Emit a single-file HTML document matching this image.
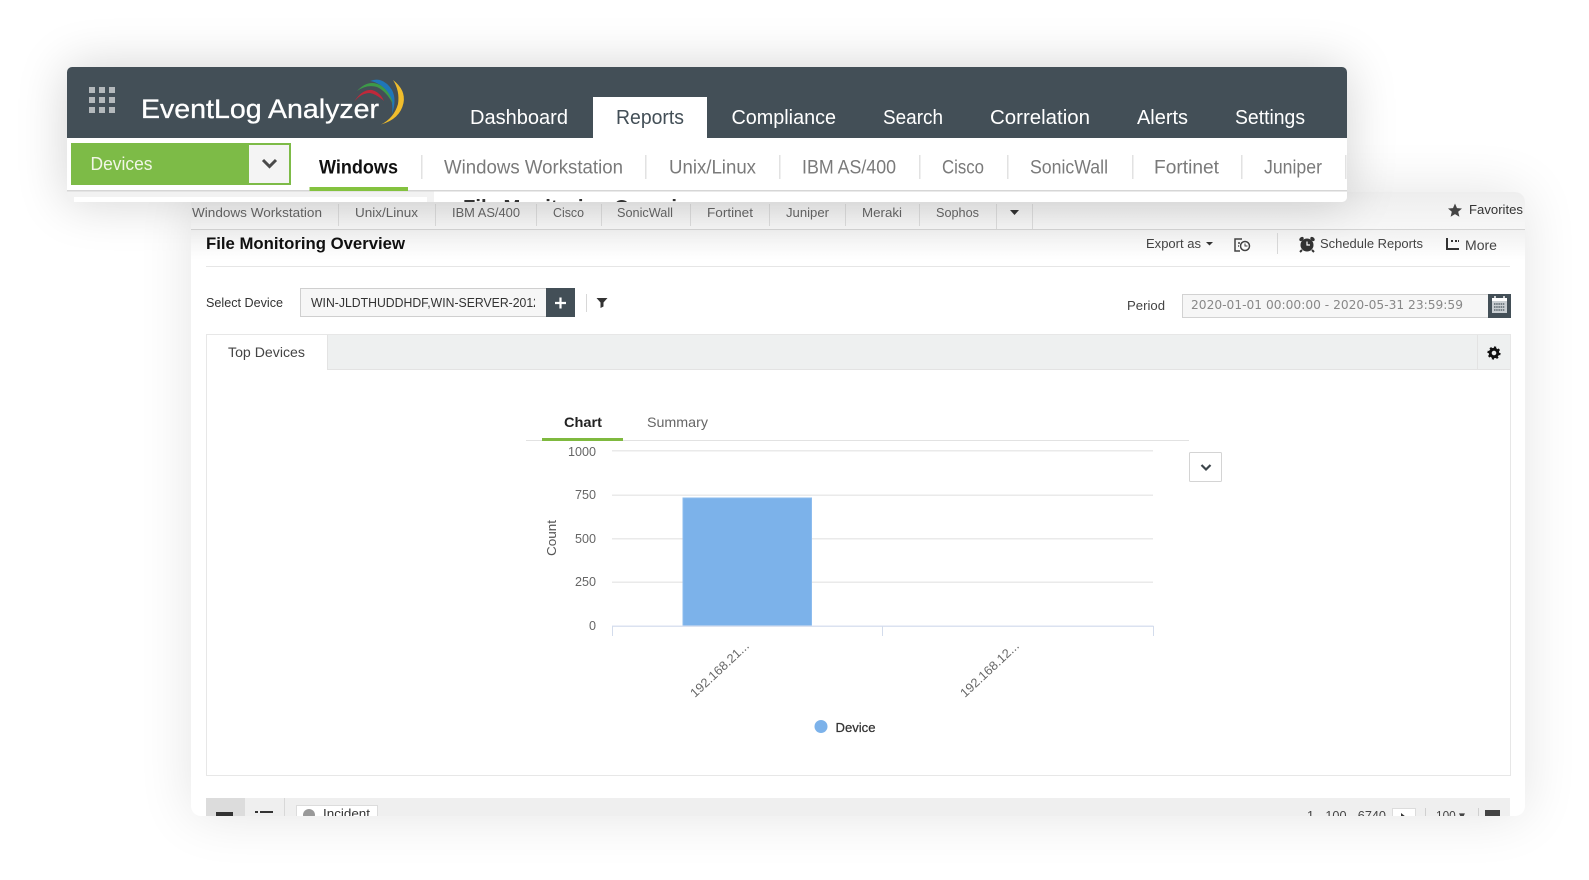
<!DOCTYPE html>
<html lang="en">
<head>
<meta charset="utf-8">
<title>EventLog Analyzer - File Monitoring Overview</title>
<style>
html,body{margin:0;padding:0;background:#fff;width:1589px;height:880px;overflow:hidden}
.abs{position:absolute}
#lower{left:191px;top:192px;width:1334px;height:624px;background:#fff;border-radius:10px;box-shadow:0 0 55px rgba(0,0,0,.11)}
#upper{left:67px;top:67px;width:1280px;height:135px;background:#f2f2f2;border-radius:5px;box-shadow:0 0 50px rgba(0,0,0,.18)}
svg{position:absolute;left:0;top:0;font-family:"Liberation Sans",sans-serif}
</style>
</head>
<body>
<div id="lower" class="abs"></div>
<svg width="1589" height="880" viewBox="0 0 1589 880">
<defs>
<clipPath id="cl"><rect x="191" y="192" width="1334" height="624" rx="10"/></clipPath>
<linearGradient id="st" x1="0" y1="0" x2="0" y2="1"><stop offset="0" stop-color="#eeeeee"/><stop offset="1" stop-color="#f7f7f7"/></linearGradient>
<linearGradient id="fade" x1="0" y1="0" x2="0" y2="1"><stop offset="0" stop-color="#f1f1f1"/><stop offset="1" stop-color="#ffffff"/></linearGradient>
</defs>
<g clip-path="url(#cl)">
<rect x="190" y="192" width="1337" height="37" fill="url(#st)"/>
<rect x="190" y="229" width="1337" height="1" fill="#d4d4d4"/>
<rect x="190" y="230" width="1337" height="30" fill="url(#fade)"/>
<g font-size="13" fill="#666">
<text x="192" y="217" textLength="130" lengthAdjust="spacingAndGlyphs">Windows Workstation</text>
<text x="355" y="217" textLength="63" lengthAdjust="spacingAndGlyphs">Unix/Linux</text>
<text x="452" y="217" textLength="68" lengthAdjust="spacingAndGlyphs">IBM AS/400</text>
<text x="553" y="217" textLength="31" lengthAdjust="spacingAndGlyphs">Cisco</text>
<text x="617" y="217" textLength="56" lengthAdjust="spacingAndGlyphs">SonicWall</text>
<text x="707" y="217" textLength="46" lengthAdjust="spacingAndGlyphs">Fortinet</text>
<text x="786" y="217" textLength="43" lengthAdjust="spacingAndGlyphs">Juniper</text>
<text x="862" y="217" textLength="40" lengthAdjust="spacingAndGlyphs">Meraki</text>
<text x="936" y="217" textLength="43" lengthAdjust="spacingAndGlyphs">Sophos</text>
</g>
<g fill="#dcdcdc">
<rect x="338" y="204" width="1" height="22"/><rect x="435" y="204" width="1" height="22"/><rect x="536" y="204" width="1" height="22"/><rect x="601" y="204" width="1" height="22"/><rect x="690" y="204" width="1" height="22"/><rect x="769" y="204" width="1" height="22"/><rect x="845" y="204" width="1" height="22"/><rect x="919" y="204" width="1" height="22"/><rect x="996" y="204" width="1" height="25"/><rect x="1032" y="204" width="1" height="25"/>
</g>
<path d="M1010 210h9l-4.500 5z" fill="#333"/>
<path d="M1455 203.500l2 4.600 5 .4-3.800 3.300 1.200 4.900-4.400-2.600-4.400 2.600 1.200-4.900-3.800-3.300 5-.4z" fill="#444"/>
<text x="1469" y="214" font-size="13" fill="#333" textLength="54" lengthAdjust="spacingAndGlyphs">Favorites</text>

<text x="206" y="249" font-size="17" font-weight="700" fill="#111" textLength="199" lengthAdjust="spacingAndGlyphs">File Monitoring Overview</text>
<rect x="206" y="266" width="1304" height="1" fill="#e6e6e6"/>

<text x="1146" y="248" font-size="13" fill="#444" textLength="55" lengthAdjust="spacingAndGlyphs">Export as</text>
<path d="M1206 242h7l-3.500 3.500z" fill="#333"/>
<path d="M1242 239h-7v12h5M1238 243h2M1238 246h1" fill="none" stroke="#444" stroke-width="1.500"/>
<circle cx="1245" cy="246" r="4.500" fill="#fff" stroke="#444" stroke-width="1.500"/>
<path d="M1245 243.500v2.500h2.500" fill="none" stroke="#444" stroke-width="1"/>
<rect x="1277" y="233" width="1" height="21" fill="#d8d8d8"/>
<circle cx="1307" cy="245" r="6.500" fill="#333"/>
<ellipse cx="1301.500" cy="239" rx="2.500" ry="1.800" transform="rotate(-40 1301.500 239)" fill="#333"/>
<ellipse cx="1312.500" cy="239" rx="2.500" ry="1.800" transform="rotate(40 1312.500 239)" fill="#333"/>
<path d="M1302 250l-2 2M1312 250l2 2" stroke="#333" stroke-width="2"/>
<path d="M1307 241.500v3.500h3" fill="none" stroke="#fff" stroke-width="1.200"/>
<text x="1320" y="248" font-size="13" fill="#444" textLength="103" lengthAdjust="spacingAndGlyphs">Schedule Reports</text>
<path d="M1447 238v11h12" fill="none" stroke="#333" stroke-width="2"/>
<path d="M1451 241h2M1455 241h2M1458 241h1" fill="none" stroke="#333" stroke-width="2"/>
<text x="1465" y="250" font-size="13.500" fill="#444" textLength="32" lengthAdjust="spacingAndGlyphs">More</text>

<text x="206" y="307" font-size="13" fill="#333" textLength="77" lengthAdjust="spacingAndGlyphs">Select Device</text>
<rect x="300.500" y="288.500" width="246" height="28" fill="#f6f6f6" stroke="#cfcfcf"/>
<svg x="311" y="290" width="224" height="24" style="position:static"><text x="0" y="17" font-size="13" fill="#333" textLength="229" lengthAdjust="spacingAndGlyphs">WIN-JLDTHUDDHDF,WIN-SERVER-2012</text></svg>
<rect x="546" y="288" width="29" height="29" fill="#434f57"/>
<path d="M560.500 297.500v11M555 303h11" stroke="#fff" stroke-width="2.200"/>
<rect x="586" y="294" width="1" height="18" fill="#d8d8d8"/>
<path d="M596.500 298h11l-4 4.500v4l-3 1.500v-5.500z" fill="#333"/>

<text x="1127" y="310" font-size="13" fill="#444" textLength="38" lengthAdjust="spacingAndGlyphs">Period</text>
<rect x="1182.500" y="294.500" width="306" height="23" fill="#f6f6f6" stroke="#d2d2d2"/>
<text x="1191" y="309" font-size="12.500" fill="#888" font-family="'DejaVu Sans',sans-serif" textLength="272" lengthAdjust="spacingAndGlyphs">2020-01-01 00:00:00 - 2020-05-31 23:59:59</text>
<rect x="1488" y="294" width="23" height="24" fill="#434f57"/>
<rect x="1492" y="298" width="15" height="15" fill="#c9ced2"/>
<rect x="1492" y="298" width="15" height="3" fill="#fff"/>
<path d="M1495 296v4M1504 296v4" stroke="#fff" stroke-width="1.500"/>
<path d="M1494 304h11M1494 307h11M1494 310h11" stroke="#5b666d" stroke-width="1.500" stroke-dasharray="1.500 .7"/>

<rect x="206.500" y="334.500" width="1304" height="441" fill="#fff" stroke="#e7e7e7"/>
<rect x="207" y="335" width="1303" height="34" fill="#eef0f0"/>
<rect x="207" y="369" width="1303" height="1" fill="#e3e3e3"/>
<rect x="207" y="335" width="120" height="35" fill="#fff"/>
<rect x="327" y="335" width="1" height="35" fill="#e3e3e3"/>
<text x="228" y="357" font-size="14" fill="#444" textLength="77" lengthAdjust="spacingAndGlyphs">Top Devices</text>
<rect x="1477" y="335" width="1" height="34" fill="#e3e3e3"/>
<circle cx="1494" cy="353" r="3.800" fill="none" stroke="#111" stroke-width="3"/>
<circle cx="1494" cy="353" r="5.500" fill="none" stroke="#111" stroke-width="2.200" stroke-dasharray="2 2.300"/>

<rect x="526" y="440" width="663" height="1" fill="#e2e2e2"/>
<rect x="542" y="438" width="81" height="3" fill="#7fb93f"/>
<text x="564" y="427" font-size="14" font-weight="700" fill="#222" textLength="38" lengthAdjust="spacingAndGlyphs">Chart</text>
<text x="647" y="427" font-size="14" fill="#666" textLength="61" lengthAdjust="spacingAndGlyphs">Summary</text>

<g fill="#eaeaea">
<rect x="612" y="450" width="541" height="1.500"/><rect x="612" y="494.500" width="541" height="1.500"/><rect x="612" y="538" width="541" height="1.500"/><rect x="612" y="581.500" width="541" height="1.500"/>
</g>
<g font-size="12.500" fill="#666">
<text x="568" y="456" textLength="28" lengthAdjust="spacingAndGlyphs">1000</text>
<text x="575" y="499" textLength="21" lengthAdjust="spacingAndGlyphs">750</text>
<text x="575" y="543" textLength="21" lengthAdjust="spacingAndGlyphs">500</text>
<text x="575" y="586" textLength="21" lengthAdjust="spacingAndGlyphs">250</text>
<text x="589" y="630" textLength="7" lengthAdjust="spacingAndGlyphs">0</text>
</g>
<text transform="translate(556,556) rotate(-90)" font-size="13" fill="#555" textLength="36" lengthAdjust="spacingAndGlyphs">Count</text>
<rect x="683" y="498" width="128.500" height="128" fill="#7cb2ea" stroke="#8dbcee"/>
<rect x="612" y="625.500" width="541.500" height="1.500" fill="#dbe2f0"/>
<path d="M612.500 626v10M882.500 626v10M1153.500 626v10" stroke="#d3dcec" fill="none"/>
<text transform="translate(695,698) rotate(-43)" font-size="12.500" fill="#666" textLength="75" lengthAdjust="spacingAndGlyphs">192.168.21...</text>
<text transform="translate(965,698) rotate(-43)" font-size="12.500" fill="#666" textLength="75" lengthAdjust="spacingAndGlyphs">192.168.12...</text>
<circle cx="821" cy="726.500" r="6.500" fill="#7cb2ea"/>
<text x="835.500" y="732" font-size="13" fill="#333" font-weight="400" textLength="40" lengthAdjust="spacingAndGlyphs" stroke="#333" stroke-width=".25">Device</text>

<rect x="1189.500" y="452.500" width="32" height="29" rx="1" fill="#fff" stroke="#d4d4d4"/>
<path d="M1201.500 465l4.500 4.500 4.500-4.500" fill="none" stroke="#3c454b" stroke-width="2.200"/>

<rect x="206" y="798" width="1304" height="20" fill="#efefef"/>
<rect x="206" y="798" width="39" height="20" fill="#dcdcdc"/>
<rect x="216" y="812" width="17" height="6" fill="#333"/>
<path d="M255 812h3M260 812h13" stroke="#333" stroke-width="2"/>
<rect x="284" y="798" width="1" height="20" fill="#d8d8d8"/>
<rect x="296.500" y="805.500" width="81" height="14" fill="#fff" stroke="#dcdcdc"/>
<circle cx="309" cy="815" r="6" fill="#999"/>
<text x="323" y="818" font-size="12.500" fill="#333" textLength="47" lengthAdjust="spacingAndGlyphs">Incident</text>
<text x="1307" y="820" font-size="12.500" fill="#444" textLength="79" lengthAdjust="spacingAndGlyphs">1 - 100 - 6740</text>
<rect x="1392.500" y="808.500" width="23" height="12" fill="#fff" stroke="#dcdcdc"/>
<path d="M1401 813l5 4h-5z" fill="#333"/>
<rect x="1425" y="808" width="1" height="10" fill="#d0d0d0"/>
<text x="1436" y="820" font-size="13" fill="#444" textLength="29" lengthAdjust="spacingAndGlyphs">100 ▾</text>
<rect x="1478" y="808" width="1" height="10" fill="#d0d0d0"/>
<rect x="1485" y="810" width="15" height="8" fill="#444"/>
</g>
</svg>

<div id="upper" class="abs"></div>
<svg width="1589" height="880" viewBox="0 0 1589 880">
<defs>
<clipPath id="cu"><rect x="67" y="67" width="1280" height="135" rx="5"/></clipPath>
</defs>
<g clip-path="url(#cu)">
<rect x="67" y="67" width="1280" height="124" fill="#fff"/>
<rect x="67" y="67" width="1280" height="71" fill="#434f57"/>
<rect x="67" y="190" width="1280" height="1.500" fill="#d6d6d6"/>
<rect x="74" y="197" width="353" height="6" fill="#fff"/>
<rect x="434" y="191.500" width="913" height="11" fill="#fff"/>
<text x="463" y="214" font-size="20" font-weight="700" fill="#333" textLength="241" lengthAdjust="spacingAndGlyphs">File Monitoring Overview</text>

<g fill="#b4b9bc">
<rect x="89" y="87" width="6" height="6"/><rect x="99" y="87" width="6" height="6"/><rect x="109" y="87" width="6" height="6"/>
<rect x="89" y="97" width="6" height="6"/><rect x="99" y="97" width="6" height="6"/><rect x="109" y="97" width="6" height="6"/>
<rect x="89" y="107" width="6" height="6"/><rect x="99" y="107" width="6" height="6"/><rect x="109" y="107" width="6" height="6"/>
</g>
<text x="141" y="118" font-size="26.500" font-weight="400" fill="#fff" stroke="#fff" stroke-width=".3" textLength="238" lengthAdjust="spacingAndGlyphs">EventLog Analyzer</text>
<path d="M393 80Q406 90 403.500 103Q400 119 381 124.500Q394 118 398 104Q400 91 393 80z" fill="#f0bd2c"/>
<path d="M370 81Q383 76 392 90Q397 100 392 114Q394 98 385 89Q378 82 370 81z" fill="#1f76b8"/>
<path d="M357 91Q368 79 380 85Q390 91 393 104Q386 91 377 87Q367 84 357 91z" fill="#3d9a48"/>
<path d="M354 102Q362 89 372 90Q380 92 384 101Q376 94 370 93Q361 93 354 102z" fill="#c0283a"/>

<g font-size="20" fill="#fff">
<text x="470" y="124" textLength="98" lengthAdjust="spacingAndGlyphs">Dashboard</text>
<text x="731.500" y="124" textLength="104.500" lengthAdjust="spacingAndGlyphs">Compliance</text>
<text x="883" y="124" textLength="60" lengthAdjust="spacingAndGlyphs">Search</text>
<text x="990" y="124" textLength="100" lengthAdjust="spacingAndGlyphs">Correlation</text>
<text x="1137" y="124" textLength="51" lengthAdjust="spacingAndGlyphs">Alerts</text>
<text x="1235" y="124" textLength="70" lengthAdjust="spacingAndGlyphs">Settings</text>
</g>
<rect x="593" y="97" width="114" height="41" fill="#fff"/>
<text x="616" y="124" font-size="20" fill="#434f57" textLength="68" lengthAdjust="spacingAndGlyphs">Reports</text>

<rect x="71.500" y="143.500" width="219" height="41" fill="#7dbb47" stroke="#7dbb47"/>
<rect x="249" y="145" width="40" height="38" fill="#f4f4f4"/>
<text x="90.500" y="170" font-size="18" fill="#f1f6e6" textLength="62" lengthAdjust="spacingAndGlyphs">Devices</text>
<path d="M263 160l6.500 6.500 6.500-6.500" fill="none" stroke="#4a4a4a" stroke-width="3"/>

<text x="319" y="173.500" font-size="19" font-weight="700" fill="#111" textLength="79" lengthAdjust="spacingAndGlyphs">Windows</text>
<rect x="309.500" y="187" width="98.500" height="4" fill="#84c23f"/>
<g font-size="19" fill="#7a7a7a">
<text x="444" y="173.500" textLength="179" lengthAdjust="spacingAndGlyphs">Windows Workstation</text>
<text x="669" y="173.500" textLength="87" lengthAdjust="spacingAndGlyphs">Unix/Linux</text>
<text x="802" y="173.500" textLength="94" lengthAdjust="spacingAndGlyphs">IBM AS/400</text>
<text x="942" y="173.500" textLength="42" lengthAdjust="spacingAndGlyphs">Cisco</text>
<text x="1030" y="173.500" textLength="78" lengthAdjust="spacingAndGlyphs">SonicWall</text>
<text x="1154" y="173.500" textLength="65" lengthAdjust="spacingAndGlyphs">Fortinet</text>
<text x="1264" y="173.500" textLength="58" lengthAdjust="spacingAndGlyphs">Juniper</text>
</g>
<g fill="#e2e2e2">
<rect x="421" y="155" width="1.500" height="24"/><rect x="645" y="155" width="1.500" height="24"/><rect x="779" y="155" width="1.500" height="24"/><rect x="919" y="155" width="1.500" height="24"/><rect x="1007" y="155" width="1.500" height="24"/><rect x="1132" y="155" width="1.500" height="24"/><rect x="1241" y="155" width="1.500" height="24"/><rect x="1345" y="155" width="1.500" height="24"/>
</g>
</g>
</svg>
</body>
</html>
